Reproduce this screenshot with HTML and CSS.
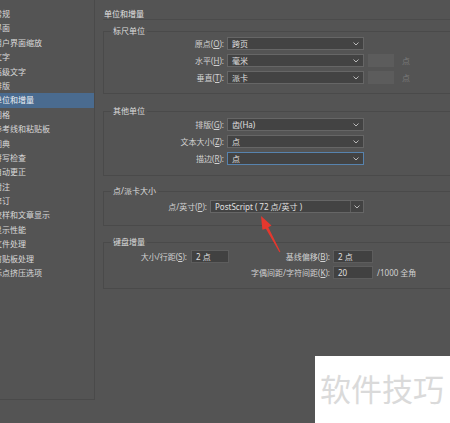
FILE: index.html
```html
<!DOCTYPE html>
<html lang="zh">
<head>
<meta charset="utf-8">
<title>首选项 - 单位和增量</title>
<link rel="stylesheet" href="styles.css">
</head>
<body>
<div class="window">
  <ul class="sidebar">
    <li>常规</li>
    <li>界面</li>
    <li>用户界面缩放</li>
    <li>文字</li>
    <li>高级文字</li>
    <li>排版</li>
    <li class="active">单位和增量</li>
    <li>网格</li>
    <li>参考线和粘贴板</li>
    <li>词典</li>
    <li>拼写检查</li>
    <li>自动更正</li>
    <li>附注</li>
    <li>修订</li>
    <li>校样和文章显示</li>
    <li>显示性能</li>
    <li>文件处理</li>
    <li>剪贴板处理</li>
    <li>标点挤压选项</li>
  </ul>

  <div class="main">
    <div class="title">单位和增量</div>

    <fieldset class="group g-ruler">
      <legend>标尺单位</legend>
      <div class="row">
        <label class="lbl w120">原点(<u>O</u>):</label>
        <div class="select w137"><span>跨页</span><svg class="chev" width="6" height="4" viewBox="0 0 6 4"><polyline points="0.5,0.5 3,3 5.5,0.5"/></svg></div>
      </div>
      <div class="row">
        <label class="lbl w120">水平(<u>H</u>):</label>
        <div class="select w137"><span>毫米</span><svg class="chev" width="6" height="4" viewBox="0 0 6 4"><polyline points="0.5,0.5 3,3 5.5,0.5"/></svg></div>
        <div class="field-off"></div>
        <span class="unit-off">点</span>
      </div>
      <div class="row">
        <label class="lbl w120">垂直(<u>T</u>):</label>
        <div class="select w137"><span>派卡</span><svg class="chev" width="6" height="4" viewBox="0 0 6 4"><polyline points="0.5,0.5 3,3 5.5,0.5"/></svg></div>
        <div class="field-off"></div>
        <span class="unit-off">点</span>
      </div>
    </fieldset>

    <fieldset class="group g-other">
      <legend>其他单位</legend>
      <div class="row">
        <label class="lbl w120">排版(<u>G</u>):</label>
        <div class="select w137"><span>齿(Ha)</span><svg class="chev" width="6" height="4" viewBox="0 0 6 4"><polyline points="0.5,0.5 3,3 5.5,0.5"/></svg></div>
      </div>
      <div class="row">
        <label class="lbl w120">文本大小(<u>Z</u>):</label>
        <div class="select w137"><span>点</span><svg class="chev" width="6" height="4" viewBox="0 0 6 4"><polyline points="0.5,0.5 3,3 5.5,0.5"/></svg></div>
      </div>
      <div class="row">
        <label class="lbl w120">描边(<u>R</u>):</label>
        <div class="select w137 focus"><span>点</span><svg class="chev" width="6" height="4" viewBox="0 0 6 4"><polyline points="0.5,0.5 3,3 5.5,0.5"/></svg></div>
      </div>
    </fieldset>

    <fieldset class="group g-ppi">
      <legend>点/派卡大小</legend>
      <div class="row">
        <label class="lbl w103">点/英寸(<u>P</u>):</label>
        <div class="select split w154"><span>PostScript ( 72 点/英寸 )</span><i class="btn"><svg class="chev" width="6" height="4" viewBox="0 0 6 4"><polyline points="0.5,0.5 3,3 5.5,0.5"/></svg></i></div>
      </div>
    </fieldset>

    <fieldset class="group g-keys">
      <legend>键盘增量</legend>
      <div class="row">
        <label class="lbl w83">大小/行距(<u>S</u>):</label>
        <div class="input w38">2 点</div>
        <label class="lbl w101">基线偏移(<u>B</u>):</label>
        <div class="input w40">2 点</div>
      </div>
      <div class="row">
        <label class="lbl w226">字偶间距/字符间距(<u>K</u>):</label>
        <div class="input w40">20</div>
        <span class="suffix">/1000 全角</span>
      </div>
    </fieldset>
  </div>
</div>

<!-- red annotation arrow -->
<svg class="arrow" width="450" height="423" viewBox="0 0 450 423">
  <polygon points="261,216 271.5,225.5 268.3,227.3 280.4,251.8 279.4,252.3 265.9,228.7 262.4,229.8"/>
</svg>

<div class="watermark">软件技巧</div>
</body>
</html>
```

FILE: styles.css
```css
html, body {
  margin: 0;
  padding: 0;
}

body {
  width: 450px;
  height: 423px;
  overflow: hidden;
  position: relative;
  background: #545454;
  color: #d6d6d6;
  font-family: "Noto Sans", "Noto Sans CJK SC", sans-serif;
  font-size: 8px;
  line-height: 10px;
}

.window {
  display: flex;
  align-items: flex-start;
}

/* left category list */
.sidebar {
  list-style: none;
  margin: 0;
  padding: 7px 0 0 0;
  width: 94px;
  height: 392px;
  border-right: 1px solid #4a4a4a;
  border-bottom: 1px solid #4a4a4a;
  overflow: hidden;
  flex: none;
}

.sidebar li {
  height: 14.4px;
  line-height: 14.4px;
  text-indent: -6px;
  white-space: nowrap;
  color: #dadada;
}

.sidebar li.active {
  background: #4a6b8f;
  color: #eef2f6;
}

/* right panel */
.main {
  flex: none;
  width: 400px;
  padding-left: 8px;
}

.title {
  padding: 9px 0 0 1px;
  height: 10px;
  border-bottom: 1px solid #4b4b4b;
  padding-bottom: 0;
  color: #e2e2e2;
}

.group {
  margin: 0;
  padding: 0;
  border: 1px solid #4a4a4a;
  min-width: 0;
}

.group legend {
  margin-left: 7px;
  padding: 0 2px;
  line-height: 10px;
  color: #dcdcdc;
}

.g-ruler { margin-top: 6px; padding: 1px 0 9px 0; }
.g-other { margin-top: 12px; padding: 2px 0 10px 0; }
.g-ppi { margin-top: 10px; padding: 4px 0 12px 0; }
.g-keys { margin-top: 11px; padding: 3px 0 9px 0; }

.row {
  display: flex;
  align-items: center;
  height: 13px;
  margin-bottom: 4px;
}

.row:last-child {
  margin-bottom: 0;
}

.g-keys .row {
  margin-bottom: 3px;
}

.g-keys .row:last-child {
  margin-bottom: 0;
}

.lbl {
  flex: none;
  text-align: right;
  white-space: nowrap;
  padding-right: 3px;
  box-sizing: border-box;
  color: #d2d2d2;
}

.lbl u {
  text-decoration-thickness: 1px;
  text-underline-offset: 1px;
}

.w83 { width: 87px; padding-right: 4px; }
.w101 { width: 104px; }
.w103 { width: 106px; }
.w120 { width: 123px; }
.w226 { width: 229px; }

.select {
  position: relative;
  flex: none;
  height: 13px;
  box-sizing: border-box;
  background: #434343;
  border: 1px solid #666;
  padding-left: 4px;
  line-height: 11px;
  color: #e0e0e0;
  white-space: nowrap;
}

.w137 { width: 137px; }
.w154 { width: 154px; }

.select.focus {
  border-color: #5783ae;
}

.chev {
  position: absolute;
  right: 4px;
  top: 4px;
  fill: none;
  stroke: #b9b9b9;
  stroke-width: 1;
}

.select.split .btn {
  position: absolute;
  top: 0;
  right: 0;
  width: 12px;
  height: 11px;
  border-left: 1px solid #5e5e5e;
}

.select.split .btn .chev {
  right: 3px;
}

.field-off {
  flex: none;
  width: 26px;
  height: 13px;
  margin-left: 4px;
  background: #5c5c5c;
}

.unit-off {
  margin-left: 8px;
  color: #7a7a7a;
}

.input {
  flex: none;
  height: 13px;
  box-sizing: border-box;
  background: #414141;
  border: 1px solid #5d5d5d;
  padding-left: 4px;
  line-height: 11px;
  color: #e0e0e0;
}

.w38 { width: 38px; }
.w40 { width: 40px; }

.suffix {
  margin-left: 4px;
  color: #d2d2d2;
}

/* overlays */
.arrow {
  position: absolute;
  left: 0;
  top: 0;
  fill: #e4382e;
  pointer-events: none;
}

.watermark {
  position: absolute;
  left: 315px;
  top: 356px;
  right: 0;
  bottom: 0;
  background: #fff;
  padding: 16px 0 0 5px;
  font-family: "Noto Sans CJK SC", sans-serif;
  font-size: 31px;
  line-height: 31px;
  color: #dadada;
  white-space: nowrap;
}
```
